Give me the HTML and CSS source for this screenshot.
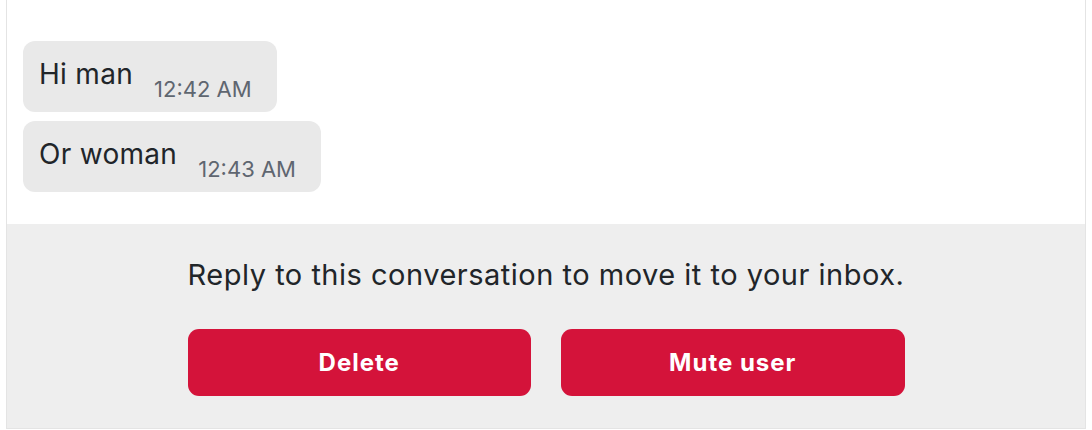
FILE: index.html
```html
<!DOCTYPE html>
<html>
<head>
<meta charset="utf-8">
<link rel="stylesheet" href="styles.css">
</head>
<body>
<div class="panel">
  <div class="messages">
    <div class="bubble"><span class="msg">Hi man</span><span class="time">12:42 AM</span></div>
    <div class="bubble"><span class="msg">Or woman</span><span class="time">12:43 AM</span></div>
  </div>
  <div class="footer">
    <div class="footer-inner">
      <p class="notice">Reply to this conversation to move it to your inbox.</p>
      <div class="actions">
        <button class="btn">Delete</button>
        <button class="btn">Mute user</button>
      </div>
    </div>
  </div>
</div>
</body>
</html>
```
FILE: styles.css
```css
html, body {
  margin: 0;
  padding: 0;
  background: #ffffff;
}
body {
  font-family: Inter, "Noto Sans", sans-serif;
  color: #212529;
}
.panel {
  margin-left: 6px;
  width: 1078px;
  border-left: 1px solid #e4e4e4;
  border-right: 1px solid #e4e4e4;
  border-bottom: 1px solid #e4e4e4;
  height: 428px;
  box-sizing: content-box;
  display: flex;
  flex-direction: column;
}
.messages {
  padding: 41px 16px 32px;
  display: flex;
  flex-direction: column;
  align-items: flex-start;
  gap: 9px;
}
.bubble {
  background: #e9e9e9;
  border-radius: 12px;
  height: 71px;
  box-sizing: border-box;
  padding: 17px 25px 0 16px;
  display: flex;
  align-items: baseline;
  gap: 21px;
}
.msg {
  font-size: 28px;
  line-height: 32px;
  letter-spacing: 0.3px;
}
.time {
  font-size: 22px;
  color: #5f6670;
  position: relative;
  top: 13px;
}
.footer {
  flex: 1;
  background: #eeeeee;
  display: flex;
  justify-content: center;
}
.footer-inner {
  width: 717px;
  padding-top: 33px;
}
.notice {
  margin: 0;
  font-size: 29px;
  line-height: 36px;
  letter-spacing: 0.5px;
  text-align: center;
  white-space: nowrap;
}
.actions {
  margin-top: 36px;
  display: flex;
  gap: 30px;
}
.btn {
  flex: 1;
  height: 67px;
  border: none;
  border-radius: 11px;
  background: #d4133a;
  color: #ffffff;
  font-family: Inter, "Noto Sans", sans-serif;
  font-weight: 700;
  font-size: 24px;
  letter-spacing: 1px;
}
```
